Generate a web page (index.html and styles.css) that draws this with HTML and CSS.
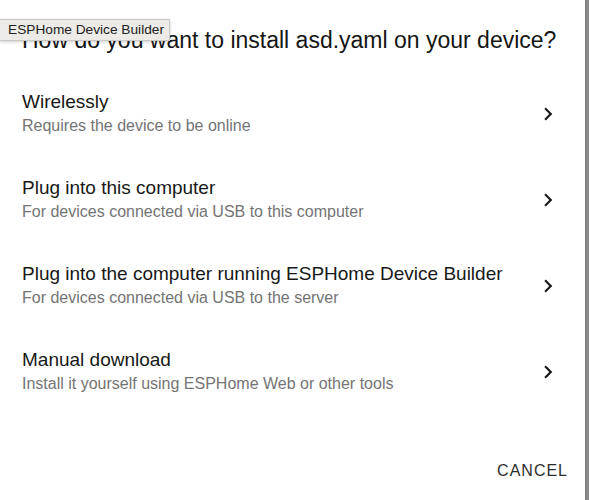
FILE: index.html
```html
<!DOCTYPE html>
<html lang="en">
  <head>
    <meta charset="UTF-8" />
    <meta name="viewport" content="width=device-width, initial-scale=1.0" />
    <title>ESPHome Device Builder</title>
    <link rel="stylesheet" href="styles.css">
  </head>
  <body>
    <div class="dialog">
      <h2 class="dialog-title">How do you want to install asd.yaml on your device?</h2>

      <div class="install-options">
        <div class="option">
          <div class="option-text">
            <span class="option-primary">Wirelessly</span>
            <span class="option-secondary">Requires the device to be online</span>
          </div>
          <svg class="chevron" viewBox="0 0 24 24"><path d="M10 6 8.59 7.41 13.17 12l-4.58 4.59L10 18l6-6z"/></svg>
        </div>

        <div class="option">
          <div class="option-text">
            <span class="option-primary">Plug into this computer</span>
            <span class="option-secondary">For devices connected via USB to this computer</span>
          </div>
          <svg class="chevron" viewBox="0 0 24 24"><path d="M10 6 8.59 7.41 13.17 12l-4.58 4.59L10 18l6-6z"/></svg>
        </div>

        <div class="option">
          <div class="option-text">
            <span class="option-primary">Plug into the computer running ESPHome Device Builder</span>
            <span class="option-secondary">For devices connected via USB to the server</span>
          </div>
          <svg class="chevron" viewBox="0 0 24 24"><path d="M10 6 8.59 7.41 13.17 12l-4.58 4.59L10 18l6-6z"/></svg>
        </div>

        <div class="option">
          <div class="option-text">
            <span class="option-primary">Manual download</span>
            <span class="option-secondary">Install it yourself using ESPHome Web or other tools</span>
          </div>
          <svg class="chevron" viewBox="0 0 24 24"><path d="M10 6 8.59 7.41 13.17 12l-4.58 4.59L10 18l6-6z"/></svg>
        </div>
      </div>

      <div class="dialog-actions">
        <button class="text-button">Cancel</button>
      </div>
    </div>

    <div class="tooltip">ESPHome Device Builder</div>
  </body>
</html>
```

FILE: styles.css
```css
body {
  margin: 0;
  font-family: "Liberation Sans", Arial, sans-serif;
  background-color: #8a8a8a;
  height: 500px;
  overflow: hidden;
}

.dialog {
  width: 586px;
  height: 500px;
  background-color: #ffffff;
  border-right: 1px solid #7b7b7b;
  box-sizing: border-box;
  display: flex;
  flex-direction: column;
}

.dialog-title {
  margin: 0;
  padding: 24px 0 0 22px;
  font-size: 23px;
  font-weight: 400;
  line-height: 32px;
  color: #151515;
  white-space: nowrap;
}

.install-options {
  margin-top: 15px;
}

.option {
  display: flex;
  align-items: center;
  padding: 19px 24px 19px 22px;
}

.option-text {
  flex: 1;
  display: flex;
  flex-direction: column;
}

.option-primary {
  font-size: 19px;
  line-height: 24px;
  color: #181818;
}

.option-secondary {
  font-size: 16px;
  line-height: 24px;
  color: #747474;
}

.chevron {
  width: 26px;
  height: 26px;
  fill: #1a1a1a;
}

.dialog-actions {
  margin-top: auto;
  display: flex;
  justify-content: flex-end;
  padding: 0 9px 11px 0;
}

.text-button {
  border: none;
  background: none;
  font-family: "Liberation Sans", Arial, sans-serif;
  font-size: 16px;
  font-weight: 400;
  letter-spacing: 1px;
  text-transform: uppercase;
  color: #2e2e2e;
  padding: 10px 8px;
  line-height: 16px;
}

.tooltip {
  position: absolute;
  top: 19px;
  left: 0;
  width: 170px;
  height: 22px;
  box-sizing: border-box;
  padding: 0 0 0 8px;
  font-family: "Liberation Sans", Arial, sans-serif;
  font-size: 13.7px;
  line-height: 20px;
  color: #222;
  background-color: #ecebe7;
  border: 1px solid #c9c8c4;
  border-left: none;
  box-shadow: 0 1px 3px rgba(0, 0, 0, 0.2);
}
```
